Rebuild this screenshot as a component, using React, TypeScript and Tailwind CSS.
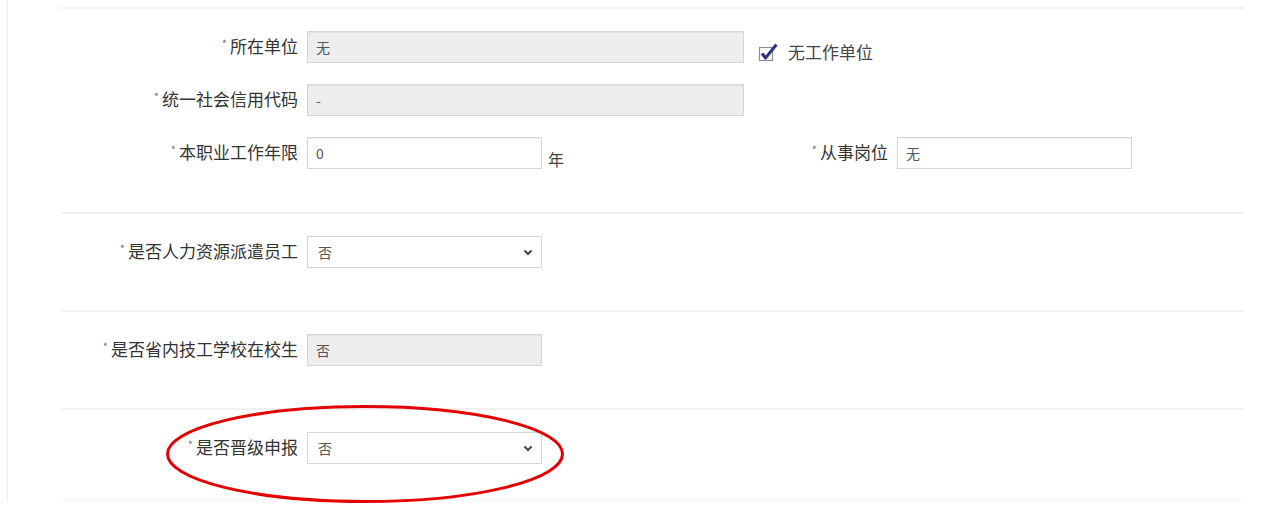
import React from 'react';

const Label = ({ text, className = '' }: { text: string; className?: string }) => (
  <div className={`text-right text-[17px] leading-[20px] text-[#333] whitespace-nowrap ${className}`}>
    <span className="relative -top-[5px] mr-[3px] text-[11px] text-[#777]">*</span>
    {text}
  </div>
);

const TextBox = ({ value, disabled = false, className = '' }: { value: string; disabled?: boolean; className?: string }) => (
  <input
    readOnly
    value={value}
    className={`h-[32px] border border-[#d6d6d6] px-[8px] text-[14px] text-[#555] outline-none shadow-[inset_0_1px_1px_rgba(0,0,0,0.06)] ${
      disabled ? 'bg-[#eeeeee]' : 'bg-white'
    } ${className}`}
  />
);

const SelectBox = ({ value }: { value: string }) => (
  <div className="flex h-[32px] w-[235px] items-center justify-between border border-[#d6d6d6] bg-white pl-[10px] pr-[8px] text-[14px] text-[#555]">
    <span>{value}</span>
    <svg width="10" height="7" viewBox="0 0 10 7">
      <polyline points="1.5,1.5 5,5 8.5,1.5" fill="none" stroke="#444" strokeWidth="2" />
    </svg>
  </div>
);

const Section = ({ children, className = '' }: { children: React.ReactNode; className?: string }) => (
  <section className={`ml-[54px] w-[1182px] border-t-2 border-[#f0f0f0] pt-[22px] ${className}`}>{children}</section>
);

const App = () => {
  return (
    <div className="relative h-[527px] w-[1271px] overflow-hidden bg-white font-['Noto_Sans_CJK_SC','Noto_Sans',sans-serif]">
      <div className="ml-[7px] h-[501px] border-l border-[#eeeeee] pt-[7px]">
        <Section className="h-[205px]">
          <div className="flex flex-col gap-[21px]">
            <div className="flex h-[32px] items-center">
              <Label text="所在单位" className="w-[236px]" />
              <TextBox value="无" disabled className="ml-[9px] w-[437px]" />
              <div className="ml-[14px] mt-[10px] flex items-center">
                <svg width="22" height="20" viewBox="0 0 22 20">
                  <rect x="1.5" y="5.5" width="13" height="13" fill="white" stroke="#8b8d98" strokeWidth="1.2" />
                  <path d="M4 11.5 L7.5 16 L18.5 2.5" fill="none" stroke="#2c3784" strokeWidth="3" strokeLinejoin="round" />
                </svg>
                <span className="ml-[8px] text-[17px] leading-[20px] text-[#444]">无工作单位</span>
              </div>
            </div>
            <div className="flex h-[32px] items-center">
              <Label text="统一社会信用代码" className="w-[236px]" />
              <TextBox value="-" disabled className="ml-[9px] w-[437px]" />
            </div>
            <div className="flex h-[32px] items-center">
              <div className="flex h-[32px] w-[560px] items-center">
                <Label text="本职业工作年限" className="w-[236px]" />
                <TextBox value="0" className="ml-[9px] w-[235px]" />
                <span className="ml-[6px] self-end text-[16px] leading-[20px] text-[#444]">年</span>
              </div>
              <Label text="从事岗位" className="w-[266px]" />
              <TextBox value="无" className="ml-[9px] w-[235px]" />
            </div>
          </div>
        </Section>

        <Section className="h-[98px]">
          <div className="flex h-[32px] items-center">
            <Label text="是否人力资源派遣员工" className="w-[236px]" />
            <div className="ml-[9px]">
              <SelectBox value="否" />
            </div>
          </div>
        </Section>

        <Section className="h-[98px]">
          <div className="flex h-[32px] items-center">
            <Label text="是否省内技工学校在校生" className="w-[236px]" />
            <TextBox value="否" disabled className="ml-[9px] w-[235px]" />
          </div>
        </Section>

        <Section className="h-[92px] border-b border-b-[#f3f3f3]">
          <div className="flex h-[32px] items-center">
            <Label text="是否晋级申报" className="w-[236px]" />
            <div className="ml-[9px]">
              <SelectBox value="否" />
            </div>
          </div>
        </Section>
      </div>

      <svg className="absolute left-[164px] top-[403px]" width="402" height="102" viewBox="0 0 402 102">
        <ellipse cx="201" cy="51" rx="197.5" ry="47.5" fill="none" stroke="#e30000" strokeWidth="3" />
      </svg>
    </div>
  );
};

export default App;
